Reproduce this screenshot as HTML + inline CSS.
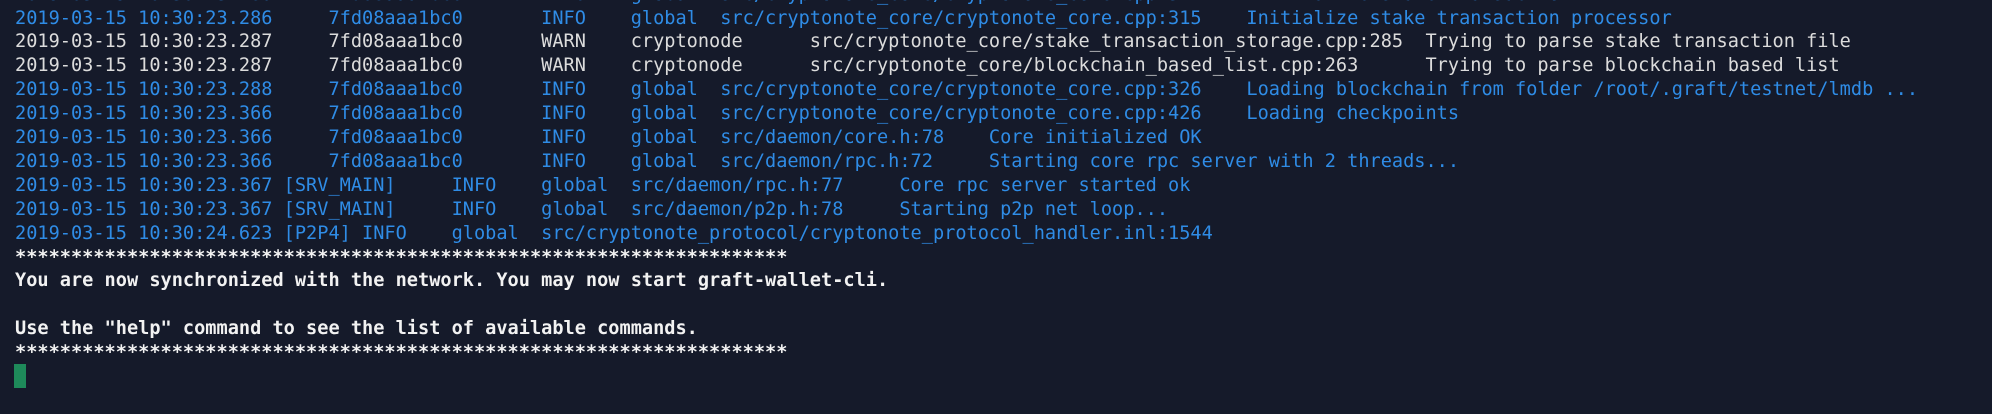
<!DOCTYPE html>
<html><head><meta charset="utf-8">
<style>
html,body{margin:0;padding:0;background:#151a2a;width:1992px;height:414px;overflow:hidden;}
pre{position:absolute;left:15px;top:-17.4px;margin:0;font-family:"DejaVu Sans Mono","Liberation Mono",monospace;font-size:18.6px;line-height:23.9px;color:#e2e2e2;white-space:pre;}
.b{color:#2f8ce6;}
.w{color:#dcdcdc;}
.s{color:#f2f2f2;font-weight:bold;}
.cur{position:absolute;left:14px;top:364px;width:12px;height:24px;background:#1e8a5a;}
</style></head><body>
<pre><span class="b">2019-03-15 10:30:23.286     7fd08aaa1bc0       INFO    global  src/cryptonote_core/cryptonote_core.cpp:314     Initialize stake transaction</span>
<span class="b">2019-03-15 10:30:23.286     7fd08aaa1bc0       INFO    global  src/cryptonote_core/cryptonote_core.cpp:315    Initialize stake transaction processor</span>
<span class="w">2019-03-15 10:30:23.287     7fd08aaa1bc0       WARN    cryptonode      src/cryptonote_core/stake_transaction_storage.cpp:285  Trying to parse stake transaction file</span>
<span class="w">2019-03-15 10:30:23.287     7fd08aaa1bc0       WARN    cryptonode      src/cryptonote_core/blockchain_based_list.cpp:263      Trying to parse blockchain based list</span>
<span class="b">2019-03-15 10:30:23.288     7fd08aaa1bc0       INFO    global  src/cryptonote_core/cryptonote_core.cpp:326    Loading blockchain from folder /root/.graft/testnet/lmdb ...</span>
<span class="b">2019-03-15 10:30:23.366     7fd08aaa1bc0       INFO    global  src/cryptonote_core/cryptonote_core.cpp:426    Loading checkpoints</span>
<span class="b">2019-03-15 10:30:23.366     7fd08aaa1bc0       INFO    global  src/daemon/core.h:78    Core initialized OK</span>
<span class="b">2019-03-15 10:30:23.366     7fd08aaa1bc0       INFO    global  src/daemon/rpc.h:72     Starting core rpc server with 2 threads...</span>
<span class="b">2019-03-15 10:30:23.367 [SRV_MAIN]     INFO    global  src/daemon/rpc.h:77     Core rpc server started ok</span>
<span class="b">2019-03-15 10:30:23.367 [SRV_MAIN]     INFO    global  src/daemon/p2p.h:78     Starting p2p net loop...</span>
<span class="b">2019-03-15 10:30:24.623 [P2P4] INFO    global  src/cryptonote_protocol/cryptonote_protocol_handler.inl:1544</span>
<span class="s">*********************************************************************</span>
<span class="s">You are now synchronized with the network. You may now start graft-wallet-cli.</span>

<span class="s">Use the "help" command to see the list of available commands.</span>
<span class="s">*********************************************************************</span></pre>
<div class="cur"></div>
</body></html>
